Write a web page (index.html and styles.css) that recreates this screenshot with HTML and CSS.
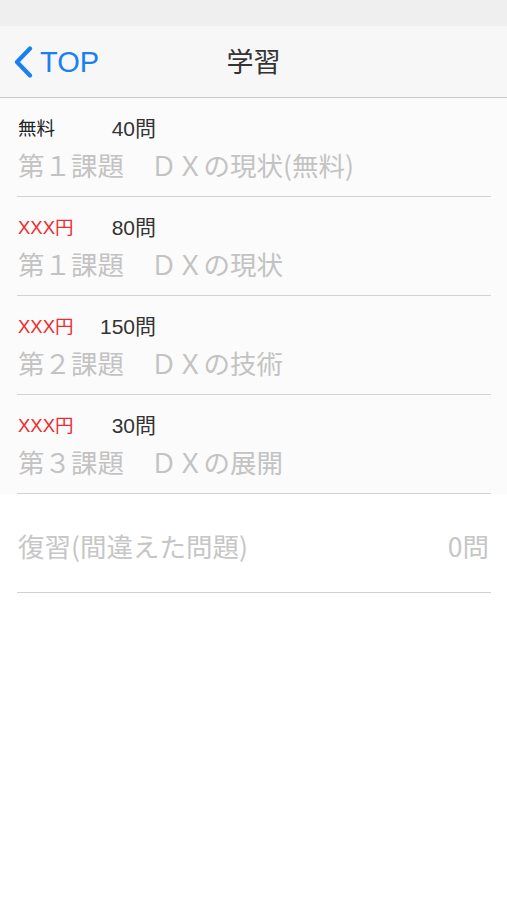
FILE: index.html
```html
<!DOCTYPE html>
<html lang="ja">
<head>
<meta charset="utf-8">
<title>学習</title>
<link rel="stylesheet" href="styles.css">
</head>
<body>
<div class="status"></div>
<header class="nav">
  <a class="back">
    <svg class="chev" width="20" height="32" viewBox="0 0 20 32"><path d="M17 2.5 L4 16 L17 29.5" fill="none" stroke="#1a7ff2" stroke-width="4.2" stroke-linecap="round" stroke-linejoin="round"/></svg>
    <span class="back-text">TOP</span>
  </a>
  <h1 class="nav-title">学習</h1>
</header>
<main class="list">
  <div class="row shaded">
    <div class="inner">
      <div class="meta"><span class="price free">無料</span><span class="count">40問</span></div>
      <div class="title">第１課題　ＤＸの現状(無料)</div>
    </div>
  </div>
  <div class="row shaded">
    <div class="inner">
      <div class="meta"><span class="price">XXX円</span><span class="count">80問</span></div>
      <div class="title">第１課題　ＤＸの現状</div>
    </div>
  </div>
  <div class="row shaded">
    <div class="inner">
      <div class="meta"><span class="price">XXX円</span><span class="count">150問</span></div>
      <div class="title">第２課題　ＤＸの技術</div>
    </div>
  </div>
  <div class="row shaded">
    <div class="inner">
      <div class="meta"><span class="price">XXX円</span><span class="count">30問</span></div>
      <div class="title">第３課題　ＤＸの展開</div>
    </div>
  </div>
  <div class="row review">
    <div class="inner review-inner">
      <span class="review-title">復習(間違えた問題)</span>
      <span class="review-count">0問</span>
    </div>
  </div>
</main>
</body>
</html>
```
FILE: styles.css
```css
* { box-sizing: border-box; }
html, body {
  margin: 0;
  padding: 0;
  background: #ffffff;
  font-family: "Liberation Sans", "Noto Sans CJK JP", sans-serif;
}
.status {
  height: 26px;
  background: #efefef;
}
.nav {
  height: 72px;
  background: #f7f7f7;
  border-bottom: 1px solid #c9c9c9;
  display: flex;
  align-items: center;
  position: relative;
}
.back {
  display: flex;
  align-items: center;
  padding-left: 13px;
  color: #1a7ff2;
}
.chev { display: block; margin-top: 1px; }
.back-text {
  font-size: 29px;
  margin-left: 7px;
  line-height: 32px;
}
.nav-title {
  position: absolute;
  left: 0;
  right: 0;
  top: 0;
  bottom: 0;
  margin: 0;
  display: flex;
  align-items: center;
  justify-content: center;
  font-family: "Noto Sans CJK JP", sans-serif;
  font-weight: 400;
  font-size: 27px;
  color: #333333;
  padding-bottom: 2px;
}
.row {
  height: 99px;
}
.row.shaded { background: #fbfbfb; }
.inner {
  height: 99px;
  margin: 0 16px 0 17px;
  border-bottom: 1.5px solid #d2d2d2;
  padding: 20px 0 0 1px;
}
.meta {
  display: flex;
  align-items: center;
  height: 22px;
  line-height: 22px;
}
.price {
  color: #ee2b2e;
  width: 58px;
  font-size: 18.5px;
}
.price.free { color: #222222; }
.count {
  width: 80px;
  text-align: right;
  color: #333333;
  font-size: 21px;
}
.title {
  margin-top: 9px;
  font-family: "Noto Sans CJK JP", sans-serif;
  font-size: 26.5px;
  line-height: 32px;
  color: #c3c3c3;
  white-space: nowrap;
}
.review-inner {
  display: flex;
  align-items: center;
  justify-content: space-between;
  padding: 6px 2px 0 1px;
}
.review-title, .review-count {
  font-family: "Noto Sans CJK JP", sans-serif;
  font-size: 26.5px;
  color: #c6c6c6;
  line-height: 32px;
}
```
